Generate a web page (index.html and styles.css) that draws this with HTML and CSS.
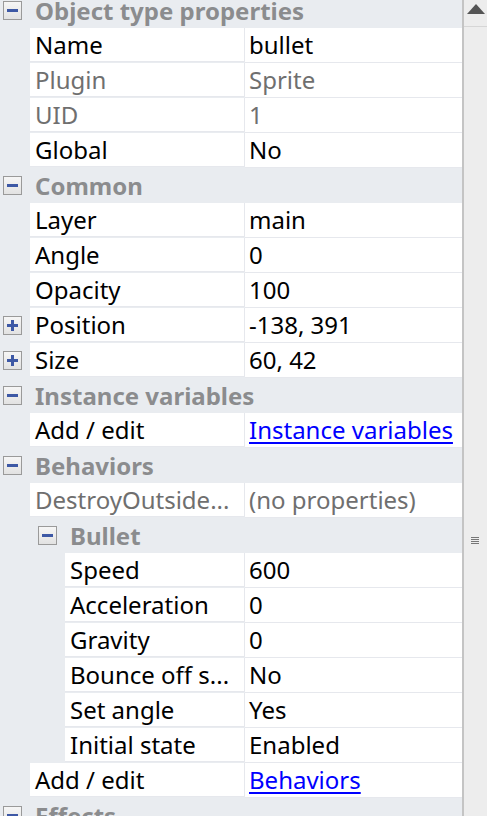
FILE: index.html
```html
<!DOCTYPE html>
<html>
<head>
<meta charset="utf-8">
<link rel="stylesheet" href="styles.css">
</head>
<body>
<div class="panel">
  <div class="grid">
    <div class="list">
      <div class="cat"><span class="tog minus"></span><span class="title">Object type properties</span></div>
      <div class="row"><div class="name">Name</div><div class="val">bullet</div></div>
      <div class="row dim"><div class="name">Plugin</div><div class="val">Sprite</div></div>
      <div class="row dim"><div class="name">UID</div><div class="val">1</div></div>
      <div class="row"><div class="name">Global</div><div class="val">No</div></div>

      <div class="cat"><span class="tog minus"></span><span class="title">Common</span></div>
      <div class="row"><div class="name">Layer</div><div class="val">main</div></div>
      <div class="row"><div class="name">Angle</div><div class="val">0</div></div>
      <div class="row"><div class="name">Opacity</div><div class="val">100</div></div>
      <div class="row"><span class="tog plus gt"></span><div class="name">Position</div><div class="val">-138, 391</div></div>
      <div class="row"><span class="tog plus gt"></span><div class="name">Size</div><div class="val">60, 42</div></div>

      <div class="cat"><span class="tog minus"></span><span class="title">Instance variables</span></div>
      <div class="row"><div class="name">Add / edit</div><div class="val"><a class="link">Instance variables</a></div></div>

      <div class="cat"><span class="tog minus"></span><span class="title">Behaviors</span></div>
      <div class="row dim"><div class="name">DestroyOutside...</div><div class="val">(no properties)</div></div>
      <div class="cat sub"><span class="tog minus"></span><span class="title">Bullet</span></div>
      <div class="row sub"><div class="name">Speed</div><div class="val">600</div></div>
      <div class="row sub"><div class="name">Acceleration</div><div class="val">0</div></div>
      <div class="row sub"><div class="name">Gravity</div><div class="val">0</div></div>
      <div class="row sub"><div class="name">Bounce off s...</div><div class="val">No</div></div>
      <div class="row sub"><div class="name">Set angle</div><div class="val">Yes</div></div>
      <div class="row sub"><div class="name">Initial state</div><div class="val">Enabled</div></div>
      <div class="row"><div class="name">Add / edit</div><div class="val"><a class="link">Behaviors</a></div></div>

      <div class="cat"><span class="tog minus"></span><span class="title">Effects</span></div>
    </div>
  </div>
  <div class="scrollbar">
    <div class="sb-btn"><span class="arrow"></span></div>
    <div class="sb-track"><span class="grip"></span></div>
  </div>
</div>
</body>
</html>
```
FILE: styles.css
```css
html, body {
  margin: 0;
  padding: 0;
  background: #e9ecf0;
  overflow: hidden;
}
.panel {
  display: flex;
  width: 487px;
  height: 816px;
  overflow: hidden;
  font-family: "Noto Sans", "Open Sans", sans-serif;
  font-size: 24px;
}
.grid {
  width: 462px;
  height: 816px;
  overflow: hidden;
  background: #e9ecf0;
}
.list {
  margin-top: -7px;
  display: flex;
  flex-direction: column;
}
.cat {
  height: 35px;
  display: flex;
  align-items: center;
  position: relative;
  padding-left: 35px;
  box-sizing: border-box;
}
.cat .title {
  font-weight: bold;
  color: #8b8c8e;
  line-height: 35px;
  white-space: nowrap;
}
.cat .tog {
  left: 3px;
}
.cat.sub {
  padding-left: 70px;
}
.cat.sub .tog {
  left: 38px;
}
.tog {
  position: absolute;
  top: 8px;
  width: 17px;
  height: 17px;
  border: 1px solid #9a9a9a;
  background: linear-gradient(#f6f6f6, #e2e2e2);
}
.tog::before {
  content: "";
  position: absolute;
  left: 3px;
  top: 7px;
  width: 11px;
  height: 3px;
  background: #3d58a5;
}
.tog.plus::after {
  content: "";
  position: absolute;
  left: 7px;
  top: 3px;
  width: 3px;
  height: 11px;
  background: #3d58a5;
}
.row {
  height: 35px;
  display: flex;
  position: relative;
  padding-left: 30px;
  box-sizing: border-box;
}
.row .gt {
  left: 3px;
  top: 8px;
}
.row.sub {
  padding-left: 65px;
}
.name, .val {
  background: #ffffff;
  height: 34px;
  line-height: 34px;
  white-space: nowrap;
  overflow: hidden;
  color: #000;
  border-bottom: 1px solid #e6e8ed;
}
.name {
  flex: 0 0 auto;
  width: 215px;
  padding-left: 5px;
  box-sizing: border-box;
  border-right: 1px solid #e6e8ed;
}
.row.sub .name {
  width: 180px;
}
.val {
  flex: 1;
  padding-left: 4px;
}
.row.dim .name, .row.dim .val {
  color: #6f6f6f;
}
.link {
  color: #0000ff;
  text-decoration: underline;
  text-underline-offset: 3px;
}
.scrollbar {
  width: 25px;
  height: 816px;
  border-left: 2px solid #c4c4c4;
  box-sizing: border-box;
  background: #ededed;
  display: flex;
  flex-direction: column;
}
.sb-btn {
  height: 27px;
  border-bottom: 1px solid #d6d6d6;
  display: flex;
  justify-content: center;
  padding-top: 4px;
  box-sizing: border-box;
}
.arrow {
  width: 0;
  height: 0;
  border-left: 9px solid transparent;
  border-right: 9px solid transparent;
  border-bottom: 10px solid #555;
}
.sb-track {
  flex: 1;
  position: relative;
}
.grip {
  position: absolute;
  left: 7px;
  top: 510px;
  width: 8px;
  height: 7px;
  background: repeating-linear-gradient(#777 0 1px, transparent 1px 2px);
}
```
